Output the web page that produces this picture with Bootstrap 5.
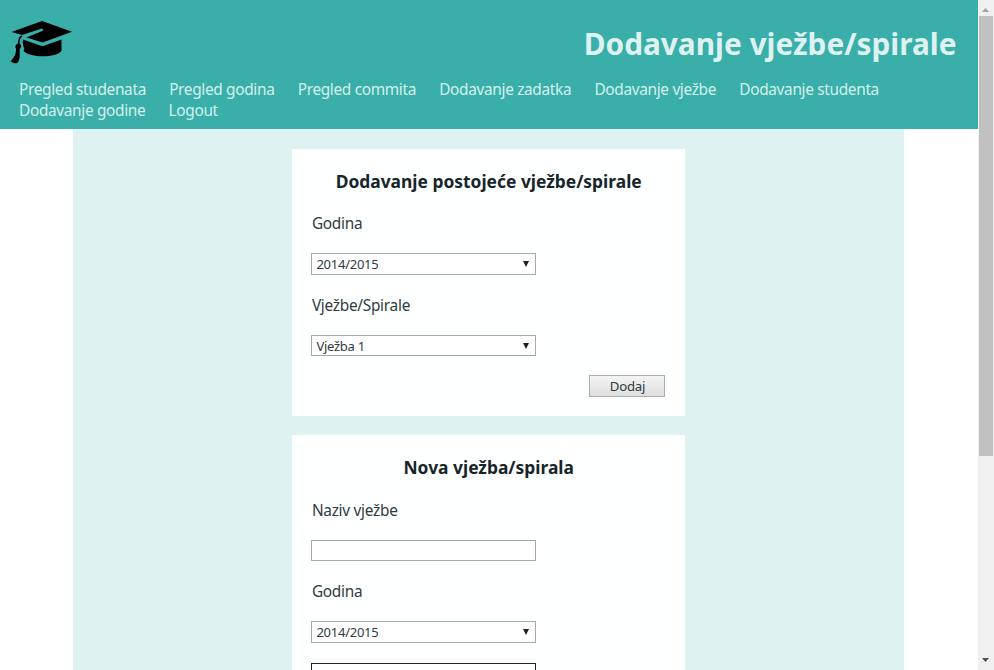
<!DOCTYPE html>
<html lang="bs">
<head>
<meta charset="utf-8">
<meta name="viewport" content="width=device-width, initial-scale=1">
<title>Dodavanje vježbe/spirale</title>
<link href="https://cdn.jsdelivr.net/npm/bootstrap@5.3.0/dist/css/bootstrap.min.css" rel="stylesheet">
<style>
body { font-family: "Noto Sans", "Open Sans", sans-serif; font-size: 15.4px; line-height: 21px; color: #2f3b40; background: #fff; }
.page-head { background: #3aafa9; height: 128.5px; }
.cap-logo { width: 64px; height: 46px; margin: 19px 0 0 9px; }
.page-title { color: #def2f1; font-size: 29.8px; line-height: 44px; font-weight: 700; margin: 22px 21px 0 0; }
.main-links { padding: 13px 19px 0; column-gap: 23.2px; }
.main-links .nav-link { color: #d3efed; padding: 0; letter-spacing: -.33px; }
.content-band { background: #def2f1; width: 831px; margin-left: 73px; padding-top: 20px; }
.form-panel { background: #feffff; width: 393px; padding: 20px 20px 19px 19.4px; margin: 0 auto 19px; }
.form-panel h3 { color: #17252a; font-size: 17.4px; line-height: 25px; font-weight: 700; margin-bottom: 19.5px; padding-left: 1px; }
.form-panel label { line-height: 22px; margin-bottom: 18px; padding-left: .5px; letter-spacing: -.28px; }
.field { width: 225px; height: 21.5px; border: 1px solid #a9a9a9; border-radius: 0; padding: 0 4px; font-size: 13px; letter-spacing: -.25px; line-height: 20px; color: #2f3b40; background-color: #fff; margin-bottom: 20px; }
select.field { background-image: url("data:image/svg+xml,%3Csvg xmlns='http://www.w3.org/2000/svg' viewBox='0 0 6 6'%3E%3Cpath fill='%2317252a' d='M0 0h6L3 6z'/%3E%3C/svg%3E"); background-size: 6px 6px; background-position: right 6px top 7px; }
.field-dark { border-color: #222; }
.btn-row { margin-top: -1px; }
.btn-add { width: 76px; height: 22px; padding: 0 0 0 1px; font-size: 13.2px; letter-spacing: -.25px; line-height: 21px; border: 1px solid #adadad; border-radius: 0; color: #2f3b40; background: linear-gradient(#f4f4f4, #dedede); }
.side-scroll { width: 16.5px; background: #f0f0f0; }
.side-scroll svg { width: 7px; height: 4px; }
.scroll-thumb { width: 14px; height: 440px; background: #c1c1c1; }
</style>
<script src="https://cdn.jsdelivr.net/npm/bootstrap@5.3.0/dist/js/bootstrap.bundle.min.js"></script>
</head>
<body>
<div class="d-flex vh-100 overflow-hidden">
  <div class="flex-grow-1 overflow-hidden">
    <header class="page-head">
      <div class="d-flex justify-content-between align-items-start">
        <svg class="cap-logo" viewBox="0 0 64 46" aria-hidden="true">
          <path d="M2.500 13 33 2l30 10.700L33.500 23.500 17.500 18.500l16.300-6.800q1-1.700-.9-2.200L13 16z"/>
          <path d="M12 16.500C9.500 18.500 9 21 9 24.500c-2.200.5-3.300 3-2 5.200.5 5-2.300 9.300-5.500 12.500q3 2.800 6.500 1.800c2-1.500 2.700-4.200 2.700-8v-6c2.400-2 1.800-4.500-.2-5.500.2-4 1.200-6 3-7.500z"/>
          <path d="M14 20.500 33.500 27.200 52.500 20.500v11.500C49 35.700 42.500 37.300 34 37.300s-15.500-1.500-19.500-5.300q1.500-2.500 0-4.500-1.500-3-.5-7z"/>
        </svg>
        <h1 class="page-title">Dodavanje vježbe/spirale</h1>
      </div>
      <nav class="nav main-links">
        <a class="nav-link" href="#">Pregled studenata</a>
        <a class="nav-link" href="#">Pregled godina</a>
        <a class="nav-link" href="#">Pregled commita</a>
        <a class="nav-link" href="#">Dodavanje zadatka</a>
        <a class="nav-link" href="#">Dodavanje vježbe</a>
        <a class="nav-link" href="#">Dodavanje studenta</a>
        <a class="nav-link" href="#">Dodavanje godine</a>
        <a class="nav-link" href="#">Logout</a>
      </nav>
    </header>
    <main class="content-band">
      <form class="form-panel">
        <h3 class="text-center">Dodavanje postojeće vježbe/spirale</h3>
        <label class="d-block" for="year1">Godina</label>
        <select class="form-select field" id="year1"><option>2014/2015</option></select>
        <label class="d-block" for="task1">Vježbe/Spirale</label>
        <select class="form-select field" id="task1"><option>Vježba 1</option></select>
        <div class="btn-row d-flex justify-content-end"><button class="btn btn-add" type="button">Dodaj</button></div>
      </form>
      <form class="form-panel">
        <h3 class="text-center">Nova vježba/spirala</h3>
        <label class="d-block" for="name2">Naziv vježbe</label>
        <input class="form-control field" id="name2" type="text">
        <label class="d-block" for="year2">Godina</label>
        <select class="form-select field" id="year2"><option>2014/2015</option></select>
        <input class="form-control field field-dark" type="text" aria-label="Redni broj">
      </form>
    </main>
  </div>
  <div class="side-scroll d-flex flex-column align-items-center flex-shrink-0">
    <svg class="mt-2 mb-1" viewBox="0 0 7 4"><path fill="#a3a3a3" d="M0 4h7L3.500 0z"/></svg>
    <div class="scroll-thumb"></div>
    <svg class="mt-auto mb-2" viewBox="0 0 7 4"><path fill="#505050" d="M0 0h7L3.500 4z"/></svg>
  </div>
</div>
</body>
</html>
